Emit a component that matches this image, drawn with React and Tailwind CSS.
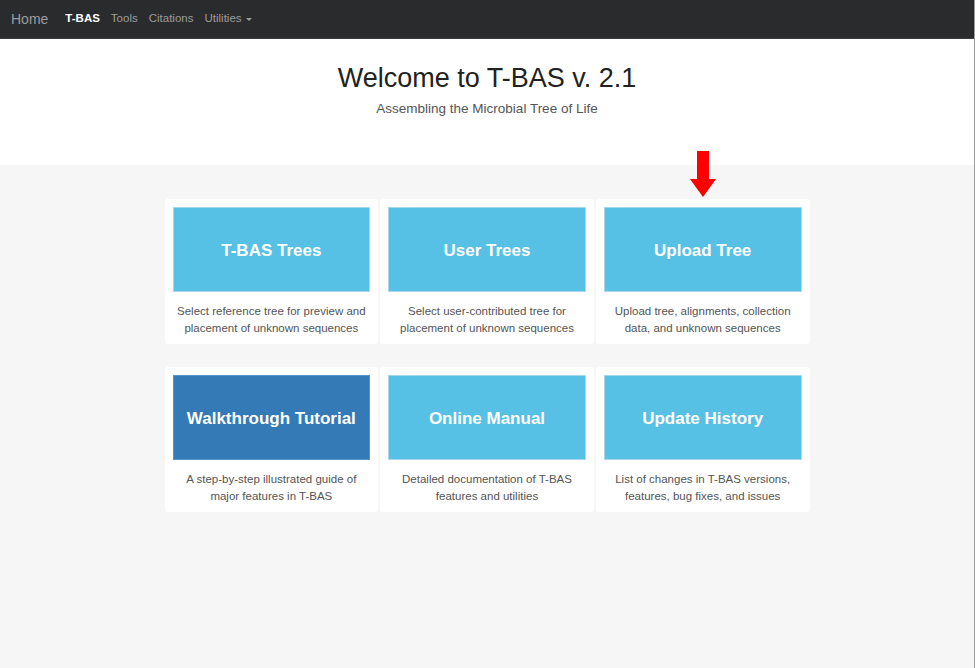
import React from 'react';

const rows = [
  [
    { title: 'T-BAS Trees', text: ['Select reference tree for preview and', 'placement of unknown sequences'] },
    { title: 'User Trees', text: ['Select user-contributed tree for', 'placement of unknown sequences'] },
    { title: 'Upload Tree', text: ['Upload tree, alignments, collection', 'data, and unknown sequences'], arrow: true },
  ],
  [
    { title: 'Walkthrough Tutorial', text: ['A step-by-step illustrated guide of', 'major features in T-BAS'], dark: true },
    { title: 'Online Manual', text: ['Detailed documentation of T-BAS', 'features and utilities'] },
    { title: 'Update History', text: ['List of changes in T-BAS versions,', 'features, bug fixes, and issues'] },
  ],
];

function DownArrow() {
  return (
    <svg width="28" height="47" viewBox="0 0 28 47" className="absolute left-1/2 -translate-x-1/2 -top-[48px]">
      <polygon points="8,0 20,0 20,28 27,28 14,46 1,28 8,28" fill="#ff0000" />
    </svg>
  );
}

export default function App() {
  return (
    <div className="min-h-[668px] bg-[#f6f6f6] border-r border-[#9a9a9a]" style={{ fontFamily: '"Liberation Sans", Arial, sans-serif' }}>
      {/* Navbar */}
      <nav className="h-[39px] bg-[#2a2b2d] border-b border-[#3d3d3d] flex items-center pl-[11px]">
        <span className="text-[14px] text-[#9d9d9d] mr-[17px]">Home</span>
        <span className="text-[11.5px] font-bold text-white mr-[11px]">T-BAS</span>
        <span className="text-[11.5px] text-[#9d9d9d] mr-[11px]">Tools</span>
        <span className="text-[11.5px] text-[#9d9d9d] mr-[11px]">Citations</span>
        <span className="text-[11.5px] text-[#9d9d9d] flex items-center">
          Utilities
          <span className="ml-[4px] inline-block w-0 h-0 border-l-[3px] border-r-[3px] border-t-[3px] border-l-transparent border-r-transparent border-t-[#9d9d9d]"></span>
        </span>
      </nav>

      {/* Header */}
      <header className="bg-white h-[126px] flex flex-col items-center pt-[21px]">
        <h1 className="text-[27px] leading-[36px] text-[#222] font-light">Welcome to T-BAS v. 2.1</h1>
        <p className="text-[13.5px] text-[#555] mt-[3px]">Assembling the Microbial Tree of Life</p>
      </header>

      {/* Card rows */}
      <div className="w-[645px] mx-auto pt-[34px] flex flex-col gap-[23px]">
        {rows.map((row, i) => (
          <div key={i} className="grid grid-cols-3 gap-[2px]">
            {row.map((c) => (
              <div key={c.title} className="relative bg-white rounded-[3px] px-[8px] pt-[8px] pb-[7px] flex flex-col">
                {c.arrow && <DownArrow />}
                <div className={`h-[85px] flex items-center justify-center border ${c.dark ? 'bg-[#337ab7] border-[#5a93c6]' : 'bg-[#56c0e5] border-[#a8d8ee]'}`}>
                  <span className="text-white font-bold text-[17px] translate-y-[1px]">{c.title}</span>
                </div>
                <div className="text-center text-[11.5px] leading-[17px] text-[#555] pt-[11px]">
                  {c.text.map((t) => (
                    <div key={t}>{t}</div>
                  ))}
                </div>
              </div>
            ))}
          </div>
        ))}
      </div>
    </div>
  );
}
